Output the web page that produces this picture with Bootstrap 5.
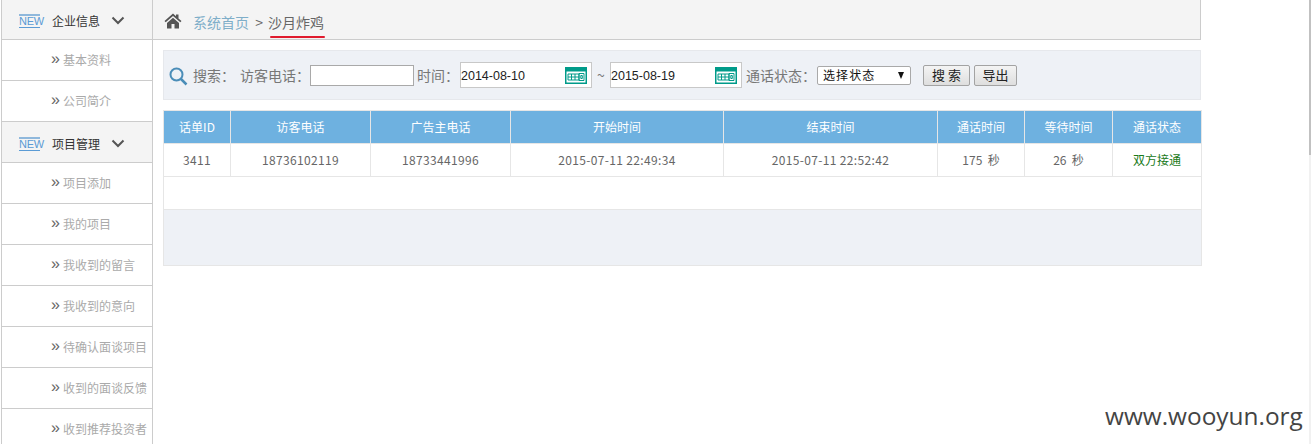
<!DOCTYPE html>
<html lang="zh"><head><meta charset="utf-8"><title>话单</title>
<link rel="stylesheet" href="https://cdn.jsdelivr.net/npm/bootstrap@5.3.0/dist/css/bootstrap.min.css">
<style>
html,body{height:444px;overflow:hidden;background:#fff}
body{font-family:"Noto Sans CJK SC","Liberation Sans",sans-serif;font-size:12px;color:#666;position:relative}
.page-wrap{height:444px;padding-left:1px;overflow:hidden}
.side-rail{width:152px;flex:none;border-left:1px solid #ccc;border-right:1px solid #ccc;margin-top:-1px}
.side-head{height:41px;background:#f4f4f4;border-bottom:1px solid #ccc;padding:3px 0 0 17px;color:#333;font-size:12px}
.side-head .new-tag{width:21px;margin-right:12px;font:11px/11px "Liberation Sans",sans-serif;color:#5b9bd5;border-top:2px solid #8fb8dc;border-bottom:1px solid #5b9bd5;text-align:center;height:14px;letter-spacing:-.3px}
.side-head svg{margin-left:11px}
.side-item{height:41px;border-bottom:1px solid #ccc;background:#fff;color:#aaa;font-size:12px;justify-content:flex-end;padding-right:5px}
.side-item span.lab{width:84px;flex:none}
.side-item span.arr{color:#666;font-family:"Liberation Sans",sans-serif;font-size:16px;line-height:1;margin-right:3px;margin-top:-2px}
.main-pane{width:1048px;flex:none}
.crumb-bar{height:40px;background:#f4f4f4;border-bottom:1px solid #ccc;border-right:1px solid #ccc;padding:6px 0 0 11px;font-size:14px;color:#666}
.crumb-bar a{color:#7eaec9;text-decoration:none;margin-left:11px}
.crumb-sep{margin:0 2px 0 3px}
.crumb-cur{position:relative;color:#666}
.crumb-cur::after{content:"";position:absolute;left:2px;right:-1px;bottom:-5px;height:2px;background:#e01b2e;border-radius:1px}
.crumb-home{margin-top:-4px}
.content-pane{padding:10px 0 0 10px}
.search-panel{height:50px;background:#eef1f6;border:1px solid #e6e8ec;padding-left:5px;font-size:14px;color:#777;white-space:nowrap}
.search-glass{margin:2px 0 0 0}
.search-panel .lbl-a{margin-left:5px}
.search-panel .lbl-b{margin-left:5px}
.phone-field{width:104px;height:21px;border:1px solid #a9a9a9;background:#fff;margin-right:3px;padding:0}
.date-box{width:132px;height:26px;margin-left:1px;background:#fff;border:1px solid #c8c8c8;font:12.5px "Liberation Sans",sans-serif;color:#222;padding:0 4px 0 0;justify-content:space-between}
.date-box input{border:0;outline:0;padding:1px 0 0;width:90px;font:inherit;color:inherit;background:transparent}
.tilde{margin:0 4px 0 5px;width:8px}
.status-lab{margin-left:4px}
.status-pick{width:94px;height:19px;border:1px solid #a9a9a9;border-radius:2px;background:#fff;font-size:12px;color:#111;padding:0 5px;letter-spacing:1.1px;justify-content:space-between;margin-right:12px;margin-left:1px}
.status-pick i{width:0;height:0;border-left:3.5px solid transparent;border-right:3.5px solid transparent;border-top:7px solid #111;margin-right:1px}
.plain-btn{height:21px;padding:0;border:1px solid #a3a3a3;border-radius:2px;background:linear-gradient(#f4f4f4,#dedede);font-size:13px;color:#222;line-height:18px}
.plain-btn.w-a{width:47px;margin-right:4px}
.plain-btn.w-b{width:43px}
.data-grid{table-layout:fixed;width:1038px;margin:10px 0 0;border-collapse:collapse;font-size:12px;color:#666}
.data-grid th,.data-grid td{border:1px solid #e6e6e6;padding:0;text-align:center;vertical-align:middle;height:33px;box-shadow:none}
.data-grid th{background:#6eb1e0;color:#fff;font-weight:400}
.data-grid td.num-cell{letter-spacing:.35px}
.data-grid tr.foot-row td{background:#eef1f6;height:56px}
.state-ok{color:#1a7a1a!important}
.wm{position:absolute;left:1105px;top:401px;font:24.4px/30px "Open Sans",sans-serif;color:#444}
.scroll-track{position:absolute;right:0;top:0;bottom:0;width:2px;background:#f1f1f1}
.scroll-thumb{position:absolute;right:0;top:0;width:2px;height:155px;background:#c1c1c1}
.c1{width:67px}.c2{width:140px}.c3{width:140px}.c4{width:213px}.c5{width:214px}.c6{width:87px}.c7{width:88px}.c8{width:89px}
</style></head><body>
<div class="page-wrap d-flex">
 <aside class="side-rail">
  <div class="side-head d-flex align-items-center"><span class="new-tag">NEW</span><span>企业信息</span><svg width="14" height="9" viewBox="0 0 14 9"><path d="M1.500 1.500 7 7l5.500-5.500" fill="none" stroke="#555" stroke-width="2"/></svg></div>
  <div class="side-item d-flex align-items-center"><span class="arr">»</span><span class="lab">基本资料</span></div>
  <div class="side-item d-flex align-items-center"><span class="arr">»</span><span class="lab">公司简介</span></div>
  <div class="side-head d-flex align-items-center"><span class="new-tag">NEW</span><span>项目管理</span><svg width="14" height="9" viewBox="0 0 14 9"><path d="M1.500 1.500 7 7l5.500-5.500" fill="none" stroke="#555" stroke-width="2"/></svg></div>
  <div class="side-item d-flex align-items-center"><span class="arr">»</span><span class="lab">项目添加</span></div>
  <div class="side-item d-flex align-items-center"><span class="arr">»</span><span class="lab">我的项目</span></div>
  <div class="side-item d-flex align-items-center"><span class="arr">»</span><span class="lab">我收到的留言</span></div>
  <div class="side-item d-flex align-items-center"><span class="arr">»</span><span class="lab">我收到的意向</span></div>
  <div class="side-item d-flex align-items-center"><span class="arr">»</span><span class="lab">待确认面谈项目</span></div>
  <div class="side-item d-flex align-items-center"><span class="arr">»</span><span class="lab">收到的面谈反馈</span></div>
  <div class="side-item d-flex align-items-center"><span class="arr">»</span><span class="lab">收到推荐投资者</span></div>
 </aside>
 <main class="main-pane">
  <div class="crumb-bar d-flex align-items-center">
   <svg class="crumb-home" width="18" height="16" viewBox="0 0 18 16"><path d="M9 0.500 0.500 8l1.200 1.300L9 3l7.300 6.300L17.500 8 14.500 5.400V1.500h-2.500v1.700zM3 10v5.500h4.500V11h3v4.500H15V10L9 4.700z" fill="#555"/></svg>
   <a href="#">系统首页</a><span class="crumb-sep">&nbsp;&gt;&nbsp;</span><span class="crumb-cur">沙月炸鸡</span>
  </div>
  <div class="content-pane">
   <form class="search-panel d-flex align-items-center">
    <svg class="search-glass" width="19" height="19" viewBox="0 0 19 19"><circle cx="7.500" cy="7.500" r="6" fill="none" stroke="#4a8db8" stroke-width="2"/><path d="m12 12 5.500 5.500" stroke="#4a8db8" stroke-width="2.500"/></svg>
    <span class="lbl-a">搜索：</span><span class="lbl-b">访客电话：</span><input class="phone-field" type="text" aria-label="访客电话"><span>时间：</span>
    <span class="date-box d-flex align-items-center"><input value="2014-08-10" aria-label="开始"><svg width="22" height="17" viewBox="0 0 22 17"><rect width="22" height="17" fill="#009b8a"/><rect x="1.500" y="4.500" width="19" height="11" fill="#fff"/><path d="M3 7h11v6H3zM6.500 7v6M10 7v6M3 10h11M14 6.500h5v7h-5zM15.800 8.500h1.500v3h-1.500z" fill="none" stroke="#009b8a"/></svg></span>
    <span class="tilde">~</span>
    <span class="date-box d-flex align-items-center"><input value="2015-08-19" aria-label="结束"><svg width="22" height="17" viewBox="0 0 22 17"><rect width="22" height="17" fill="#009b8a"/><rect x="1.500" y="4.500" width="19" height="11" fill="#fff"/><path d="M3 7h11v6H3zM6.500 7v6M10 7v6M3 10h11M14 6.500h5v7h-5zM15.800 8.500h1.500v3h-1.500z" fill="none" stroke="#009b8a"/></svg></span>
    <span class="status-lab">通话状态：</span>
    <span class="status-pick d-flex align-items-center"><span>选择状态</span><i></i></span>
    <button type="button" class="plain-btn w-a">搜 索</button><button type="button" class="plain-btn w-b">导出</button>
   </form>
   <table class="data-grid">
    <colgroup><col class="c1"><col class="c2"><col class="c3"><col class="c4"><col class="c5"><col class="c6"><col class="c7"><col class="c8"></colgroup>
    <thead><tr><th>话单ID</th><th>访客电话</th><th>广告主电话</th><th>开始时间</th><th>结束时间</th><th>通话时间</th><th>等待时间</th><th>通话状态</th></tr></thead>
    <tbody>
     <tr><td class="num-cell">3411</td><td class="num-cell">18736102119</td><td class="num-cell">18733441996</td><td class="num-cell">2015-07-11 22:49:34</td><td class="num-cell">2015-07-11 22:52:42</td><td>175&nbsp; 秒</td><td>26&nbsp; 秒</td><td class="state-ok">双方接通</td></tr>
     <tr><td colspan="8"></td></tr>
     <tr class="foot-row"><td colspan="8"></td></tr>
    </tbody>
   </table>
  </div>
 </main>
</div>
<div class="wm">www.wooyun.org</div>
<div class="scroll-track"></div><div class="scroll-thumb"></div>
</body></html>
